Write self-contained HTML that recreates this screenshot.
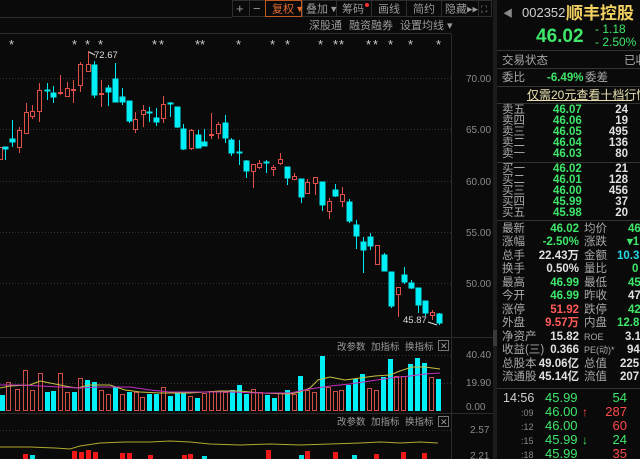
<!DOCTYPE html>
<html><head><meta charset="utf-8">
<style>
html,body{margin:0;padding:0;background:#0a0a0a;width:640px;height:459px;overflow:hidden}
svg{display:block}
text{font-family:"Liberation Sans","Noto Sans CJK SC",sans-serif}
.g{fill:#9a9a9a;font-size:11px}
.h{fill:#9a9a9a;font-size:9.5px}
.ax{fill:#8a8a8a;font-size:10px;font-family:"Liberation Mono",monospace}
.lb{fill:#a8a8a8;font-size:11.5px}
.gn{fill:#3ee66a;font-size:11.5px;font-weight:bold}
.wh{fill:#e0e0e0;font-size:11.5px;font-weight:bold}
.rd{fill:#ff5a5a;font-size:11.5px;font-weight:bold}
.cy{fill:#28d8e8;font-size:11.5px;font-weight:bold}
</style></head><body>
<svg width="640" height="459" viewBox="0 0 640 459" xmlns="http://www.w3.org/2000/svg">
<rect width="640" height="459" fill="#0a0a0a"/>
<g stroke="#2e2e2e" fill="none">
<rect x="232.5" y="0.5" width="259" height="16"/>
<line x1="249.5" y1="0" x2="249.5" y2="17"/><line x1="302.5" y1="0" x2="302.5" y2="17"/>
<line x1="336.5" y1="0" x2="336.5" y2="17"/><line x1="371.5" y1="0" x2="371.5" y2="17"/>
<line x1="406.5" y1="0" x2="406.5" y2="17"/><line x1="441.5" y1="0" x2="441.5" y2="17"/>
<line x1="478.5" y1="0" x2="478.5" y2="17"/>
<line x1="0" y1="33.5" x2="451" y2="33.5"/>
<line x1="0" y1="17.5" x2="232" y2="17.5"/>
</g>
<rect x="265.5" y="0.5" width="36" height="16" fill="none" stroke="#c05a20"/>
<text x="236" y="13" class="g" style="font-size:13px">+</text>
<text x="253" y="13" class="g" style="font-size:13px">−</text>
<text x="272" y="12.5" fill="#e06a30" font-size="11">复权 ▾</text>
<text x="306" y="12.5" class="g">叠加 ▾</text>
<text x="342" y="12.5" class="g">筹码</text><circle cx="367" cy="5" r="2" fill="#ff3030"/>
<text x="378" y="12.5" class="g">画线</text>
<text x="413" y="12.5" class="g">简约</text>
<text x="445" y="12.5" class="g">隐藏▸▸</text>
<text x="481" y="12" class="g" style="font-size:9px">⛶</text>
<text x="309" y="29" class="g">深股通</text>
<text x="349" y="29" class="g">融资融券</text>
<text x="400" y="29" class="g">设置均线 ▾</text>
<g fill="#cccccc" font-size="13" font-family="Liberation Sans">
<text x="9" y="49">*</text><text x="72" y="49">*</text><text x="85" y="49">*</text><text x="98" y="49">*</text>
<text x="152" y="49">*</text><text x="159" y="49">*</text><text x="195" y="49">*</text><text x="200" y="49">*</text>
<text x="236" y="49">*</text><text x="270" y="49">*</text><text x="285" y="49">*</text>
<text x="318" y="49">*</text><text x="333" y="49">*</text><text x="339" y="49">*</text>
<text x="366" y="49">*</text><text x="373" y="49">*</text><text x="388" y="49">*</text><text x="408" y="49">*</text><text x="436" y="49">*</text>
</g>
<g stroke="#333" stroke-dasharray="1,2">
<line x1="0" y1="78.5" x2="451" y2="78.5"/><line x1="0" y1="129.5" x2="451" y2="129.5"/>
<line x1="0" y1="181.5" x2="451" y2="181.5"/><line x1="0" y1="232.5" x2="451" y2="232.5"/>
<line x1="0" y1="283.5" x2="451" y2="283.5"/>
<line x1="0" y1="355.5" x2="451" y2="355.5"/><line x1="0" y1="383.5" x2="451" y2="383.5"/>
<line x1="0" y1="430.5" x2="451" y2="430.5"/>
</g>
<g stroke="#2c2c2c">
<line x1="451.5" y1="34" x2="451.5" y2="459"/>
<line x1="0" y1="337.5" x2="493" y2="337.5"/>
<line x1="0" y1="413.5" x2="493" y2="413.5"/>
</g>
<rect x="493" y="0" width="4" height="459" fill="#1c1c1c"/>
<rect x="493" y="330" width="4" height="16" fill="#3a3a3a"/>
<g class="ax">
<text x="466" y="82">70.00</text><text x="466" y="133">65.00</text><text x="466" y="185">60.00</text>
<text x="466" y="236">55.00</text><text x="466" y="287">50.00</text>
<text x="466" y="358">40.40</text><text x="466" y="386">19.90</text><text x="466" y="410">0.00</text>
<text x="470" y="433">2.57</text><text x="470" y="459">2.21</text>
</g>
<g stroke-width="1">
<g stroke="#e0504a" fill="#0a0a0a">
<line x1="1.5" y1="147" x2="1.5" y2="160"/><rect x="-1.5" y="147.5" width="4" height="12"/>
<line x1="19.5" y1="127" x2="19.5" y2="153"/><rect x="17.5" y="130.5" width="4" height="17"/>
<line x1="26.5" y1="103" x2="26.5" y2="134"/><rect x="24.5" y="112.5" width="4" height="21"/>
<line x1="32.5" y1="105" x2="32.5" y2="119"/><rect x="30.5" y="111.5" width="4" height="5"/>
<line x1="39.5" y1="83" x2="39.5" y2="122"/><rect x="37.5" y="90.5" width="4" height="21"/>
<line x1="60.5" y1="75" x2="60.5" y2="95"/><rect x="58.5" y="92.5" width="4" height="1"/>
<line x1="67.5" y1="82" x2="67.5" y2="97"/><rect x="65.5" y="88.5" width="4" height="8"/>
<line x1="73.5" y1="80" x2="73.5" y2="103"/><rect x="71.5" y="89.5" width="4" height="1"/>
<line x1="80.5" y1="62" x2="80.5" y2="92"/><rect x="78.5" y="64.5" width="4" height="21"/>
<line x1="88.5" y1="51" x2="88.5" y2="72"/><rect x="86.5" y="64.5" width="4" height="7"/>
<line x1="101.5" y1="80" x2="101.5" y2="107"/><rect x="99.5" y="93.5" width="4" height="1"/>
<line x1="135.5" y1="112" x2="135.5" y2="133"/><rect x="133.5" y="119.5" width="4" height="10"/>
<line x1="143.5" y1="105" x2="143.5" y2="127"/><rect x="141.5" y="110.5" width="4" height="4"/>
<line x1="163.5" y1="96" x2="163.5" y2="123"/><rect x="161.5" y="104.5" width="4" height="14"/>
<line x1="191.5" y1="129" x2="191.5" y2="150"/><rect x="189.5" y="130.5" width="4" height="18"/>
<line x1="211.5" y1="113" x2="211.5" y2="139"/><rect x="209.5" y="134.5" width="4" height="1"/>
<line x1="218.5" y1="122" x2="218.5" y2="139"/><rect x="216.5" y="124.5" width="4" height="9"/>
<line x1="253.5" y1="164" x2="253.5" y2="188"/><rect x="251.5" y="164.5" width="4" height="7"/>
<line x1="259.5" y1="160" x2="259.5" y2="169"/><rect x="257.5" y="163.5" width="4" height="4"/>
<line x1="273.5" y1="165" x2="273.5" y2="176"/><rect x="271.5" y="167.5" width="4" height="2"/>
<line x1="280.5" y1="153" x2="280.5" y2="165"/><rect x="278.5" y="159.5" width="4" height="4"/>
<line x1="294.5" y1="173" x2="294.5" y2="180"/><rect x="292.5" y="176.5" width="4" height="3"/>
<line x1="307.5" y1="179" x2="307.5" y2="194"/><rect x="305.5" y="182.5" width="4" height="11"/>
<line x1="315.5" y1="177" x2="315.5" y2="195"/><rect x="313.5" y="177.5" width="4" height="6"/>
<line x1="329.5" y1="198" x2="329.5" y2="219"/><rect x="327.5" y="201.5" width="4" height="10"/>
<line x1="342.5" y1="187" x2="342.5" y2="207"/><rect x="340.5" y="194.5" width="4" height="7"/>
<line x1="377.5" y1="245" x2="377.5" y2="265"/><rect x="375.5" y="245.5" width="4" height="19"/>
<line x1="398.5" y1="287" x2="398.5" y2="317"/><rect x="396.5" y="287.5" width="4" height="7"/>
<line x1="432.5" y1="310" x2="432.5" y2="320"/><rect x="430.5" y="312.5" width="4" height="3"/>
</g>
<g stroke="#00e8f0" fill="#00f0f8">
<line x1="5.5" y1="147" x2="5.5" y2="160"/><rect x="3" y="147" width="5" height="2"/>
<line x1="12.5" y1="120" x2="12.5" y2="147"/><rect x="10" y="139" width="5" height="3"/>
<line x1="47.5" y1="83" x2="47.5" y2="100"/><rect x="45" y="90" width="5" height="1"/>
<line x1="53.5" y1="86" x2="53.5" y2="103"/><rect x="51" y="93" width="5" height="4"/>
<line x1="94.5" y1="61" x2="94.5" y2="98"/><rect x="92" y="65" width="5" height="30"/>
<line x1="108.5" y1="85" x2="108.5" y2="106"/><rect x="106" y="88" width="5" height="4"/>
<line x1="115.5" y1="63" x2="115.5" y2="102"/><rect x="113" y="79" width="5" height="23"/>
<line x1="122.5" y1="88" x2="122.5" y2="105"/><rect x="120" y="97" width="5" height="5"/>
<line x1="129.5" y1="101" x2="129.5" y2="123"/><rect x="127" y="101" width="5" height="20"/>
<line x1="149.5" y1="107" x2="149.5" y2="122"/><rect x="147" y="112" width="5" height="1"/>
<line x1="156.5" y1="108" x2="156.5" y2="126"/><rect x="154" y="118" width="5" height="4"/>
<line x1="170.5" y1="102" x2="170.5" y2="117"/><rect x="168" y="103" width="5" height="1"/>
<line x1="177.5" y1="107" x2="177.5" y2="128"/><rect x="175" y="107" width="5" height="20"/>
<line x1="183.5" y1="124" x2="183.5" y2="150"/><rect x="181" y="129" width="5" height="20"/>
<line x1="198.5" y1="130" x2="198.5" y2="148"/><rect x="196" y="135" width="5" height="13"/>
<line x1="204.5" y1="129" x2="204.5" y2="146"/><rect x="202" y="142" width="5" height="4"/>
<line x1="225.5" y1="115" x2="225.5" y2="143"/><rect x="223" y="123" width="5" height="15"/>
<line x1="231.5" y1="138" x2="231.5" y2="156"/><rect x="229" y="140" width="5" height="13"/>
<line x1="239.5" y1="140" x2="239.5" y2="165"/><rect x="237" y="152" width="5" height="1"/>
<line x1="246.5" y1="160" x2="246.5" y2="178"/><rect x="244" y="161" width="5" height="10"/>
<line x1="266.5" y1="160" x2="266.5" y2="173"/><rect x="264" y="162" width="5" height="1"/>
<line x1="287.5" y1="167" x2="287.5" y2="185"/><rect x="285" y="167" width="5" height="11"/>
<line x1="301.5" y1="179" x2="301.5" y2="203"/><rect x="299" y="179" width="5" height="18"/>
<line x1="322.5" y1="182" x2="322.5" y2="211"/><rect x="320" y="182" width="5" height="23"/>
<line x1="335.5" y1="184" x2="335.5" y2="197"/><rect x="333" y="190" width="5" height="6"/>
<line x1="349.5" y1="199" x2="349.5" y2="223"/><rect x="347" y="202" width="5" height="19"/>
<line x1="356.5" y1="220" x2="356.5" y2="249"/><rect x="354" y="225" width="5" height="11"/>
<line x1="363.5" y1="237" x2="363.5" y2="273"/><rect x="361" y="242" width="5" height="8"/>
<line x1="370.5" y1="233" x2="370.5" y2="250"/><rect x="368" y="237" width="5" height="9"/>
<line x1="384.5" y1="253" x2="384.5" y2="271"/><rect x="382" y="255" width="5" height="16"/>
<line x1="391.5" y1="272" x2="391.5" y2="308"/><rect x="389" y="272" width="5" height="34"/>
<line x1="404.5" y1="267" x2="404.5" y2="284"/><rect x="402" y="275" width="5" height="7"/>
<line x1="411.5" y1="280" x2="411.5" y2="289"/><rect x="409" y="283" width="5" height="5"/>
<line x1="418.5" y1="288" x2="418.5" y2="313"/><rect x="416" y="288" width="5" height="17"/>
<line x1="425.5" y1="301" x2="425.5" y2="316"/><rect x="423" y="301" width="5" height="12"/>
<line x1="439.5" y1="313" x2="439.5" y2="325"/><rect x="437" y="314" width="5" height="9"/>
</g>
</g>
<text x="94" y="58" fill="#ddd" font-size="9.5" font-family="Liberation Mono">72.67</text>
<line x1="89" y1="52" x2="95" y2="55" stroke="#ddd"/>
<text x="403" y="323" fill="#ddd" font-size="9.5" font-family="Liberation Mono">45.87</text>
<line x1="428" y1="322" x2="437" y2="325" stroke="#ddd"/>
<g class="h"><text x="337" y="350">改参数</text><text x="371" y="350">加指标</text><text x="405" y="350">换指标</text>
<text x="337" y="425">改参数</text><text x="371" y="425">加指标</text><text x="405" y="425">换指标</text></g>
<rect x="438.5" y="340.5" width="10" height="10" fill="none" stroke="#777"/><text x="440" y="349" fill="#999" font-size="9">✕</text>
<rect x="438.5" y="416.5" width="10" height="10" fill="none" stroke="#777"/><text x="440" y="425" fill="#999" font-size="9">✕</text>
<g fill="#00f0f8">
<rect x="0" y="395" width="5" height="16"/><rect x="45" y="392" width="5" height="19"/><rect x="51" y="391" width="5" height="20"/>
<rect x="72" y="392" width="5" height="19"/><rect x="85" y="380" width="5" height="31"/><rect x="92" y="382" width="5" height="29"/>
<rect x="113" y="387" width="5" height="24"/><rect x="127" y="392" width="5" height="19"/><rect x="147" y="394" width="5" height="17"/>
<rect x="154" y="394" width="5" height="17"/><rect x="168" y="396" width="5" height="15"/><rect x="175" y="393" width="5" height="18"/>
<rect x="181" y="393" width="5" height="18"/><rect x="195" y="398" width="5" height="13"/><rect x="230" y="390" width="5" height="21"/>
<rect x="237" y="385" width="5" height="26"/><rect x="244" y="394" width="5" height="17"/><rect x="265" y="395" width="5" height="16"/>
<rect x="272" y="398" width="5" height="13"/><rect x="285" y="390" width="5" height="21"/><rect x="298" y="376" width="5" height="35"/>
<rect x="320" y="356" width="5" height="55"/><rect x="346" y="385" width="5" height="26"/><rect x="353" y="379" width="5" height="32"/>
<rect x="360" y="374" width="5" height="37"/><rect x="381" y="377" width="5" height="34"/><rect x="388" y="359" width="5" height="52"/>
<rect x="408" y="364" width="5" height="47"/><rect x="415" y="358" width="5" height="53"/><rect x="422" y="363" width="5" height="48"/>
<rect x="436" y="379" width="5" height="32"/>
</g>
<g fill="none" stroke="#d05048">
<rect x="6.5" y="382.5" width="4" height="28"/><rect x="15.5" y="389.5" width="4" height="21"/><rect x="23.5" y="370.5" width="4" height="40"/>
<rect x="30.5" y="390.5" width="4" height="20"/><rect x="38.5" y="373.5" width="4" height="37"/><rect x="58.5" y="373.5" width="4" height="37"/>
<rect x="65.5" y="392.5" width="4" height="18"/><rect x="78.5" y="378.5" width="4" height="32"/><rect x="99.5" y="390.5" width="4" height="20"/>
<rect x="106.5" y="394.5" width="4" height="16"/><rect x="120.5" y="394.5" width="4" height="16"/><rect x="134.5" y="392.5" width="4" height="18"/>
<rect x="140.5" y="397.5" width="4" height="13"/><rect x="161.5" y="387.5" width="4" height="23"/><rect x="188.5" y="396.5" width="4" height="14"/>
<rect x="202.5" y="393.5" width="4" height="17"/><rect x="209.5" y="391.5" width="4" height="19"/><rect x="216.5" y="391.5" width="4" height="19"/>
<rect x="223.5" y="392.5" width="4" height="18"/><rect x="251.5" y="389.5" width="4" height="21"/><rect x="258.5" y="392.5" width="4" height="18"/>
<rect x="278.5" y="393.5" width="4" height="17"/><rect x="292.5" y="394.5" width="4" height="16"/><rect x="305.5" y="390.5" width="4" height="20"/>
<rect x="312.5" y="392.5" width="4" height="18"/><rect x="326.5" y="387.5" width="4" height="23"/><rect x="333.5" y="391.5" width="4" height="19"/>
<rect x="339.5" y="390.5" width="4" height="20"/><rect x="367.5" y="388.5" width="4" height="22"/><rect x="374.5" y="390.5" width="4" height="20"/>
<rect x="394.5" y="376.5" width="4" height="34"/><rect x="401.5" y="376.5" width="4" height="34"/><rect x="429.5" y="377.5" width="4" height="33"/>
</g>
<polyline fill="none" stroke="#c8c040" points="0,388 10,386 30,385 40,381 55,384 70,387 78,388 88,385 110,385 125,390 140,392 160,393 190,393 220,391 240,391 260,393 290,394 300,392 310,388 318,380 330,377 345,380 360,378 375,376 390,375 400,371 412,367 425,367 440,369"/>
<polyline fill="none" stroke="#c030c0" points="0,385 20,385 40,386 60,387 80,388 100,387 130,387 150,390 170,392 200,392 230,392 260,393 290,393 310,389 330,386 350,384 370,381 390,378 410,376 425,374 440,373"/>
<polyline fill="none" stroke="#b0a830" points="0,447 30,447 55,448 70,449 80,446 100,443 125,442 150,442 170,441 190,442 210,444 240,445 270,444 300,445 330,444 360,443 380,442 400,443 420,442 438,443"/>
<g fill="#ee1818">
<rect x="23" y="454" width="5" height="5"/><rect x="72" y="451" width="5" height="8"/><rect x="79" y="452" width="5" height="7"/><rect x="86" y="450" width="5" height="9"/><rect x="93" y="452" width="5" height="7"/>
<rect x="120" y="453" width="5" height="6"/><rect x="127" y="453" width="5" height="6"/><rect x="148" y="455" width="5" height="4"/><rect x="182" y="455" width="5" height="4"/>
<rect x="188" y="454" width="5" height="5"/><rect x="266" y="450" width="5" height="9"/><rect x="305" y="451" width="5" height="8"/>
<rect x="333" y="452" width="5" height="7"/><rect x="374" y="454" width="5" height="5"/><rect x="401" y="452" width="5" height="7"/><rect x="422" y="453" width="5" height="6"/>
</g>
<g fill="#00e0e8"><rect x="30" y="455" width="5" height="4"/><rect x="202" y="456" width="5" height="3"/><rect x="299" y="455" width="5" height="4"/><rect x="352" y="455" width="5" height="4"/></g>
<g stroke="#333">
<line x1="497" y1="50.5" x2="640" y2="50.5"/><line x1="497" y1="68.5" x2="640" y2="68.5"/>
<line x1="497" y1="86.5" x2="640" y2="86.5"/><line x1="497" y1="103.5" x2="640" y2="103.5"/>
<line x1="497" y1="162.5" x2="640" y2="162.5"/><line x1="497" y1="220.5" x2="640" y2="220.5"/>
<line x1="497" y1="388.5" x2="640" y2="388.5"/>
</g>
<text x="503" y="17" fill="#888" font-size="10">◀</text>
<text x="522" y="17" fill="#cfcfcf" font-size="13">002352</text>
<text x="566" y="19" fill="#f0d060" font-size="17" font-weight="bold">顺丰控股</text>
<text x="536" y="42" fill="#3ee66a" font-size="19" font-weight="bold">46.02</text>
<text x="595" y="33" fill="#3ee66a" font-size="12">- 1.18</text>
<text x="595" y="46" fill="#3ee66a" font-size="12">- 2.50%</text>
<text x="502" y="64" class="lb">交易状态</text><text x="624" y="64" class="lb">已收</text>
<text x="502" y="81" class="lb">委比</text><text x="547" y="81" class="gn">-6.49%</text><text x="585" y="81" class="lb">委差</text>
<text x="527" y="99" fill="#e8e0b0" font-size="12">仅需20元查看十档行情</text>
<line x1="527" y1="100.5" x2="632" y2="100.5" stroke="#e8e0b0"/>
<g class="lb" font-size="11"><text x="502" y="113">卖五</text><text x="502" y="124">卖四</text><text x="502" y="135">卖三</text><text x="502" y="146">卖二</text><text x="502" y="157">卖一</text>
<text x="502" y="172">买一</text><text x="502" y="183">买二</text><text x="502" y="194">买三</text><text x="502" y="205">买四</text><text x="502" y="216">买五</text></g>
<g class="gn"><text x="553" y="113">46.07</text><text x="553" y="124">46.06</text><text x="553" y="135">46.05</text><text x="553" y="146">46.04</text><text x="553" y="157">46.03</text>
<text x="553" y="172">46.02</text><text x="553" y="183">46.01</text><text x="553" y="194">46.00</text><text x="553" y="205">45.99</text><text x="553" y="216">45.98</text></g>
<g class="wh" text-anchor="end"><text x="628" y="113">24</text><text x="628" y="124">19</text><text x="628" y="135">495</text><text x="628" y="146">136</text><text x="628" y="157">80</text>
<text x="628" y="172">21</text><text x="628" y="183">128</text><text x="628" y="194">456</text><text x="628" y="205">37</text><text x="628" y="216">20</text></g>
<g class="lb"><text x="502" y="232">最新</text><text x="502" y="245">涨幅</text><text x="502" y="259">总手</text><text x="502" y="272">换手</text><text x="502" y="286">最高</text><text x="502" y="299">今开</text>
<text x="502" y="313">涨停</text><text x="502" y="326">外盘</text><text x="502" y="340">净资产</text><text x="502" y="353">收益(三)</text><text x="502" y="367">总股本</text><text x="502" y="380">流通股</text>
<text x="584" y="232">均价</text><text x="584" y="245">涨跌</text><text x="584" y="259">金额</text><text x="584" y="272">量比</text><text x="584" y="286">最低</text><text x="584" y="299">昨收</text>
<text x="584" y="313">跌停</text><text x="584" y="326">内盘</text><text x="584" y="340" font-size="9">ROE</text><text x="584" y="353" font-size="9">PE(动)*</text><text x="584" y="367">总值</text><text x="584" y="380">流值</text></g>
<g text-anchor="end"><text x="579" y="232" class="gn">46.02</text><text x="579" y="245" class="gn">-2.50%</text><text x="579" y="259" class="wh">22.43万</text><text x="579" y="272" class="wh">0.50%</text>
<text x="579" y="286" class="gn">46.99</text><text x="579" y="299" class="gn">46.99</text><text x="579" y="313" class="rd">51.92</text><text x="579" y="326" class="rd">9.57万</text>
<text x="579" y="340" class="wh">15.82</text><text x="579" y="353" class="wh">0.366</text><text x="579" y="367" class="wh">49.06亿</text><text x="579" y="380" class="wh">45.14亿</text></g>
<g><text x="628" y="232" class="gn">46</text><text x="627" y="245" class="gn">▾1</text><text x="617" y="259" class="cy">10.3</text><text x="632" y="272" class="gn">0</text>
<text x="628" y="286" class="gn">45</text><text x="628" y="299" class="wh">47</text><text x="628" y="313" class="gn">42</text><text x="617" y="326" class="gn">12.8</text>
<text x="625" y="340" class="wh">3.1</text><text x="627" y="353" class="wh">94</text><text x="620" y="367" class="wh">225</text><text x="620" y="380" class="wh">207</text></g>
<text x="503" y="402" fill="#cfcfcf" font-size="12.5">14:56</text>
<g fill="#888" font-size="9"><text x="521" y="416">:09</text><text x="521" y="430">:12</text><text x="521" y="444">:15</text><text x="521" y="458">:18</text></g>
<g fill="#3ee66a" font-size="13"><text x="545" y="402">45.99</text><text x="545" y="416">46.00</text><text x="545" y="430">46.00</text><text x="545" y="444">45.99</text><text x="545" y="458">45.99</text></g>
<text x="582" y="416" fill="#ff4a4a" font-size="12">↑</text><text x="582" y="444" fill="#3ee66a" font-size="12">↓</text>
<g font-size="13" text-anchor="end"><text x="627" y="402" fill="#3ee66a">54</text><text x="627" y="416" fill="#ff4a4a">287</text><text x="627" y="430" fill="#ff4a4a">60</text><text x="627" y="444" fill="#3ee66a">24</text><text x="627" y="458" fill="#ff4a4a">35</text></g>
</svg>
</body></html>
